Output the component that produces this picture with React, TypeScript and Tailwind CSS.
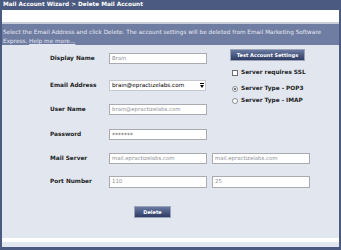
import React from "react";

const font = "font-['DejaVu_Sans',Verdana,sans-serif]";

function Field({ value, className = "" }: { value: string; className?: string }) {
  return (
    <div
      className={`h-[11px] w-[98px] bg-white border border-[#a9abb0] flex items-center px-[2px] text-[5.4px] text-[#8f9299] leading-none ${className}`}
    >
      {value}
    </div>
  );
}

function Row({ label, children, className = "" }: { label: string; children: React.ReactNode; className?: string }) {
  return (
    <div className={`flex items-center ${className}`}>
      <div className="w-[59px] text-[5.8px] font-bold text-[#1c1e24] leading-none">{label}</div>
      {children}
    </div>
  );
}

function DarkButton({ label, className = "" }: { label: string; className?: string }) {
  return (
    <div
      className={`h-[12px] flex items-center justify-center bg-gradient-to-b from-[#6a7aa3] to-[#2f3c63] border border-[#9aa3b8] text-white text-[5px] font-bold leading-none ${className}`}
    >
      {label}
    </div>
  );
}

function Option({ children, label, className = "" }: { children: React.ReactNode; label: string; className?: string }) {
  return (
    <div className={`flex items-center text-[5.8px] font-bold text-[#1c1e24] leading-none ${className}`}>
      {children}
      {label}
    </div>
  );
}

export default function App() {
  return (
    <div className={`w-[341px] h-[250px] bg-[#4b5a80] flex flex-col ${font}`}>
      <div className="h-[10px] flex items-center px-[3px] text-white text-[5.75px] font-bold leading-none">
        Mail Account Wizard &gt; Delete Mail Account
      </div>
      <div className="flex-1 flex flex-col mx-[2px] mb-[3px]">
        <div className="h-[12px] bg-white" />
        <div className="h-[2px] bg-[#c9cedb]" />
        <div className="h-[21px] bg-[#6f7da2] px-[1px] pt-[4px] text-[5.75px] leading-[9px] text-[#e4e8f2] whitespace-nowrap overflow-hidden">
          <div>Select the Email Address and click Delete. The account settings will be deleted from Email Marketing Software</div>
          <div>
            Express. <span className="underline">Help me more...</span>
          </div>
        </div>
        <div className="flex-1 bg-[#e2e6ef] flex flex-col">
          <div className="flex flex-col pl-[48px] pt-[4px]">
            <div className="flex items-start">
              <div className="flex flex-col pt-[4px]">
                <Row label="Display Name">
                  <Field value="Brain" />
                </Row>
                <Row label="Email Address" className="mt-[16px]">
                  <div className="h-[11px] w-[97px] bg-white border border-[#c5c8ce] flex items-center justify-between pl-[2px] pr-[1px] text-[5.7px] text-black leading-none">
                    <span>brain@epractizelabs.com</span>
                    <span className="flex flex-col items-center">
                      <span className="w-[4px] h-[1px] bg-black mb-[1px]" />
                      <span className="w-0 h-0 border-l-[2.5px] border-r-[2.5px] border-t-[3px] border-l-transparent border-r-transparent border-t-black" />
                    </span>
                  </div>
                </Row>
                <Row label="User Name" className="mt-[13px]">
                  <Field value="brain@epractizelabs.com" />
                </Row>
              </div>
              <div className="ml-[23px] flex flex-col">
                <DarkButton label="Test Account Settings" className="w-[75px]" />
                <Option label="Server requires SSL" className="mt-[9px]">
                  <span className="w-[6px] h-[6px] border border-[#6d6f75] bg-white mr-[3px] ml-[2px]" />
                </Option>
                <Option label="Server Type - POP3" className="mt-[10px]">
                  <span className="w-[6px] h-[6px] rounded-full border border-[#8a8c92] bg-white mr-[3px] ml-[2px] flex items-center justify-center">
                    <span className="w-[2px] h-[2px] rounded-full bg-[#444]" />
                  </span>
                </Option>
                <Option label="Server Type - IMAP" className="mt-[6px]">
                  <span className="w-[6px] h-[6px] rounded-full border border-[#8a8c92] bg-white mr-[3px] ml-[2px]" />
                </Option>
              </div>
            </div>
            <Row label="Password" className="mt-[14px]">
              <Field value="*******" className="text-[6px] text-[#555]" />
            </Row>
            <Row label="Mail Server" className="mt-[13px]">
              <Field value="mail.epractizelabs.com" />
              <Field value="mail.epractizelabs.com" className="ml-[5px] w-[97px]" />
            </Row>
            <Row label="Port Number" className="mt-[12px]">
              <Field value="110" className="h-[12px]" />
              <Field value="25" className="ml-[5px] w-[97px] h-[12px]" />
            </Row>
          </div>
          <div className="mt-[18px] pl-[132px]">
            <DarkButton label="Delete" className="w-[37px]" />
          </div>
          <div className="mt-[20px] h-[4px] bg-white" />
        </div>
      </div>
    </div>
  );
}
